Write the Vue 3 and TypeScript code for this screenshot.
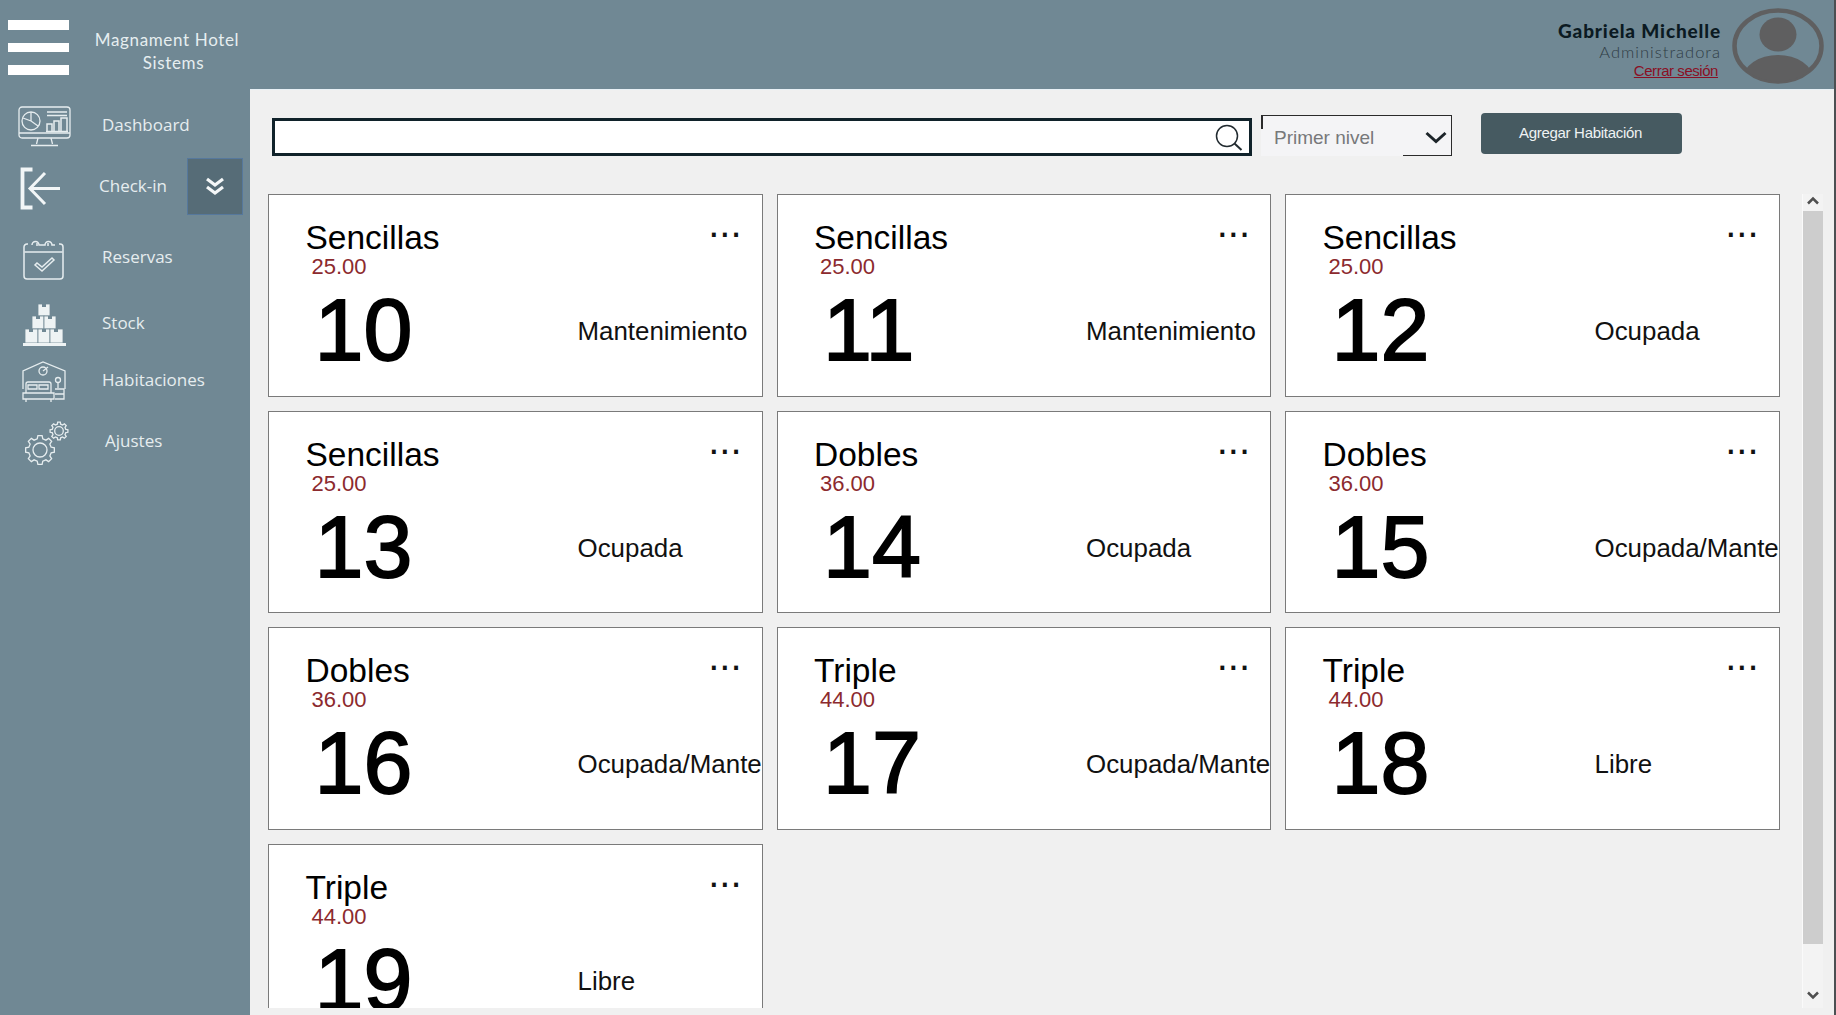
<script setup lang="ts">
interface Room { type: string; price: string; num: number; status: string }
const rooms: Room[] = [
  { type: 'Sencillas', price: '25.00', num: 10, status: 'Mantenimiento' },
  { type: 'Sencillas', price: '25.00', num: 11, status: 'Mantenimiento' },
  { type: 'Sencillas', price: '25.00', num: 12, status: 'Ocupada' },
  { type: 'Sencillas', price: '25.00', num: 13, status: 'Ocupada' },
  { type: 'Dobles', price: '36.00', num: 14, status: 'Ocupada' },
  { type: 'Dobles', price: '36.00', num: 15, status: 'Ocupada/Mantenimiento' },
  { type: 'Dobles', price: '36.00', num: 16, status: 'Ocupada/Mantenimiento' },
  { type: 'Triple', price: '44.00', num: 17, status: 'Ocupada/Mantenimiento' },
  { type: 'Triple', price: '44.00', num: 18, status: 'Libre' },
  { type: 'Triple', price: '44.00', num: 19, status: 'Libre' },
]

function gear(cx: number, cy: number, outer: number, inner: number, teeth: number): string {
  const pts: string[] = []
  const step = (Math.PI * 2) / teeth
  for (let i = 0; i < teeth; i++) {
    const a = i * step
    const offs: [number, number][] = [
      [-0.5, inner], [-0.3, outer], [0.3, outer], [0.5, inner],
    ]
    for (const [o, r] of offs) {
      const t = a + o * step * 0.62
      pts.push(`${(cx + Math.cos(t) * r).toFixed(2)} ${(cy + Math.sin(t) * r).toFixed(2)}`)
    }
  }
  return 'M' + pts.join('L') + 'Z'
}
const gearBig = gear(16, 29, 14.5, 11.5, 8)
const gearSmall = gear(35, 10, 9, 7, 8)
</script>

<template>
  <div class="app">
    <header class="topbar">
      <div class="brand">
        <div class="burger"><span></span><span></span><span></span></div>
        <div class="brand-name">
          <div>Magnament Hotel</div>
          <div class="brand-sub">Sistems</div>
        </div>
      </div>
      <div class="user">
        <div class="user-text">
          <div class="user-name">Gabriela Michelle</div>
          <div class="user-role">Administradora</div>
          <a class="user-logout">Cerrar sesión</a>
        </div>
        <svg class="avatar" viewBox="0 0 92 76" aria-hidden="true">
          <defs><clipPath id="av"><ellipse cx="46" cy="38" rx="44" ry="35.5" /></clipPath></defs>
          <ellipse cx="46" cy="38" rx="43.5" ry="35.5" fill="none" stroke="#5f5f60" stroke-width="4.5" />
          <ellipse cx="46" cy="26.5" rx="18.5" ry="17" fill="#5f5f60" />
          <ellipse cx="46" cy="71" rx="35" ry="24" fill="#5f5f60" clip-path="url(#av)" />
        </svg>
      </div>
    </header>

    <div class="body">
      <nav class="sidebar">
        <div class="nav-item">
          <span class="nav-icon">
            <svg width="53" height="43" viewBox="0 0 53 43" fill="none" stroke="#e6edef" stroke-width="1.3">
              <rect x="1" y="1" width="51" height="31" rx="3" />
              <path d="M1 27h51M20 32l-1.500 6M33 32l1.500 6M13 39.500h27" />
              <circle cx="13" cy="15" r="9" />
              <path d="M13 6v9l7 5M13 15l-8-3" />
              <path d="M29 6h20M29 9.500h20" />
              <path d="M29 25v-7h5v7M36 25v-10h5v10M43 25v-13h6v13M28 25.500h22" stroke-width="1.500" />
            </svg>
          </span>
          <span class="nav-label">Dashboard</span>
        </div>
        <div class="nav-item nav-checkin">
          <span class="nav-icon">
            <svg width="44" height="44" viewBox="0 0 44 44" fill="none" stroke="#f2f6f7">
              <path d="M13.500 3.500H3.500V41.500H13.500" stroke-width="3.800" />
              <path d="M41 22.500H11M26 7L11 22.500L26 38" stroke-width="3" />
            </svg>
          </span>
          <span class="nav-label">Check-in</span>
          <span class="collapse">
            <svg width="20" height="20" viewBox="0 0 20 20" fill="none" stroke="#f4f7f8" stroke-width="3.200">
              <path d="M2 3l8 6 8-6M2 11l8 6 8-6" />
            </svg>
          </span>
        </div>
        <div class="nav-item">
          <span class="nav-icon">
            <svg width="42" height="42" viewBox="0 0 42 42" fill="none" stroke="#e6edef" stroke-width="1.500">
              <path d="M5 6h-1a3 3 0 0 0-3 3V38a3 3 0 0 0 3 3H37a3 3 0 0 0 3-3V9a3 3 0 0 0-3-3h-1" />
              <path d="M9 7a3.500 3.500 0 0 1 7 0h6a3.500 3.500 0 0 1 7 0h3" />
              <path d="M14 5v3M25 5v3" />
              <path d="M1.500 14H39.500" />
              <path d="M12 27l7 6 12-11-2-2-10 9-5-4z" />
            </svg>
          </span>
          <span class="nav-label">Reservas</span>
        </div>
        <div class="nav-item">
          <span class="nav-icon">
            <svg width="43" height="44" viewBox="0 0 43 44" fill="#eef3f4" stroke="#708894" stroke-width=".8">
              <rect x="15" y="1" width="12" height="12" />
              <rect x="9" y="13" width="12" height="13" />
              <rect x="21" y="13" width="12" height="13" />
              <rect x="2" y="26" width="13" height="14" />
              <rect x="15" y="26" width="12" height="14" />
              <rect x="27" y="26" width="13" height="14" />
              <rect x="0" y="40" width="43" height="3" stroke="none" />
              <path d="M19 1v3h4V1M13 13v3h4v-3M25 13v3h4v-3M6 26v3h4v-3M19 26v3h4v-3M31 26v3h4v-3" fill="#708894" stroke="none" />
            </svg>
          </span>
          <span class="nav-label">Stock</span>
        </div>
        <div class="nav-item">
          <span class="nav-icon">
            <svg width="44" height="42" viewBox="0 0 44 42" fill="none" stroke="#e6edef" stroke-width="1.300">
              <path d="M1 13V10L21 1L43 10V13M1 13V28M43 13V28" />
              <circle cx="21" cy="10" r="4" />
              <path d="M21 10l5-4" />
              <path d="M4 32v-9a2 2 0 0 1 2-2H27a2 2 0 0 1 2 2v9M1 32H32v6H1zM4 38v3M29 38v3" />
              <path d="M6 28v-4h9v4zM17 28v-4h9v4z" />
              <circle cx="36" cy="19" r="2.500" />
              <path d="M36 21.500V27M33 28h9v10h-9M33 33h9" />
            </svg>
          </span>
          <span class="nav-label">Habitaciones</span>
        </div>
        <div class="nav-item nav-settings">
          <span class="nav-icon">
            <svg width="46" height="44" viewBox="0 0 46 44" fill="none" stroke="#e6edef" stroke-width="1.300">
              <path :d="gearBig" />
              <circle cx="16" cy="29" r="7" />
              <path :d="gearSmall" />
              <circle cx="35" cy="10" r="4.300" />
            </svg>
          </span>
          <span class="nav-label">Ajustes</span>
        </div>
      </nav>

      <main class="main">
        <div class="toolbar">
          <div class="search">
            <svg width="28" height="28" viewBox="0 0 28 28" fill="none" stroke="#222b30">
              <circle cx="12" cy="12" r="10.500" stroke-width="1.500" />
              <path d="M19.500 19.500L26.500 26" stroke-width="2" />
            </svg>
          </div>
          <div class="select">
            <span class="select-text">Primer nivel</span>
            <svg width="22" height="14" viewBox="0 0 22 14" fill="none" stroke="#1c2429" stroke-width="3">
              <path d="M1.500 2L11 10.500L20.500 2" />
            </svg>
          </div>
          <button class="add" type="button">Agregar Habitación</button>
        </div>

        <div class="content">
          <div class="grid">
            <article v-for="r in rooms" :key="r.num" class="card">
              <div class="card-top">
                <span class="card-type">{{ r.type }}</span>
                <span class="card-menu">...</span>
              </div>
              <div class="card-price">{{ r.price }}</div>
              <div class="card-bottom">
                <span class="card-num">{{ r.num }}</span>
                <span class="card-status">{{ r.status }}</span>
              </div>
            </article>
          </div>
          <div class="scrollbar">
            <svg width="14" height="9" viewBox="0 0 14 9" fill="none" stroke="#4f4f4f" stroke-width="2.500"><path d="M2 7.500L7 2.500L12 7.500" /></svg>
            <div class="thumb"></div>
            <svg width="14" height="9" viewBox="0 0 14 9" fill="none" stroke="#4f4f4f" stroke-width="2.500"><path d="M2 1.500L7 6.500L12 1.500" /></svg>
          </div>
        </div>
      </main>
    </div>
  </div>
</template>

<style scoped>
.app {
  width: 1836px;
  height: 1015px;
  box-sizing: border-box;
  border-right: 2px solid #4b4f52;
  display: flex;
  flex-direction: column;
  overflow: hidden;
  background: #708894;
  font-family: "Liberation Sans", Arial, sans-serif;
}
.topbar {
  height: 89px;
  flex: none;
  display: flex;
  justify-content: space-between;
}
.brand { display: flex; align-items: flex-start; }
.burger {
  width: 61px;
  margin: 20px 0 0 8px;
  display: flex;
  flex-direction: column;
  gap: 13px;
}
.burger span { display: block; height: 9.500px; background: #fff; }
.brand-name {
  width: 158px;
  margin: 28px 0 0 19px;
  text-align: center;
  font-family: Lato, sans-serif;
  font-weight: 400;
  font-size: 17px;
  line-height: 23px;
  letter-spacing: .65px;
  color: #e6eef0;
}
.brand-sub { padding-left: 13px; }
.user { display: flex; align-items: flex-start; }
.user-text {
  margin-top: 20px;
  text-align: right;
  display: flex;
  flex-direction: column;
  align-items: flex-end;
}
.user-name {
  font-family: Lato, sans-serif;
  font-weight: 900;
  font-size: 19px;
  line-height: 22px;
  letter-spacing: .85px;
  color: #0b1a22;
}
.user-role {
  font-family: Lato, sans-serif;
  font-weight: 300;
  font-size: 16.500px;
  line-height: 20px;
  letter-spacing: 1px;
  color: #2f3c44;
}
.user-logout {
  margin-right: 3px;
  font-size: 15px;
  line-height: 18px;
  letter-spacing: -.45px;
  color: #8a0f24;
  text-decoration: underline;
}
.avatar { width: 92px; height: 76px; margin: 8px 10px 0 11px; }

.body { flex: 1; min-height: 0; display: flex; }
.sidebar {
  width: 250px;
  flex: none;
  box-sizing: border-box;
  padding-top: 6px;
  display: grid;
  grid-template-rows: 60px 62px 80px 52px 62px 60px;
  align-content: start;
}
.nav-item { display: flex; align-items: center; }
.nav-icon { width: 88px; flex: none; display: flex; justify-content: center; padding-top: 4px; box-sizing: border-box; }
.nav-label {
  margin-left: 14px;
  padding-bottom: 2px;
  font-family: "Open Sans", sans-serif;
  font-size: 17px;
  color: #e6edef;
}
.nav-checkin .nav-icon { justify-content: flex-start; padding-left: 19px; }
.nav-checkin .nav-label { margin-left: 11px; }
.nav-settings .nav-icon { padding-left: 6px; }
.nav-settings .nav-label { margin-left: 17px; }
.collapse {
  width: 56px;
  height: 57px;
  box-sizing: border-box;
  margin-left: auto;
  margin-right: 7px;
  background: #566c77;
  border: 1px solid #56789c;
  display: flex;
  align-items: center;
  justify-content: center;
}

.main {
  flex: 1;
  min-width: 0;
  display: flex;
  flex-direction: column;
  background: #f0f0f0;
  border-top: 1px solid #e8f0f5;
  box-sizing: border-box;
}
.toolbar {
  height: 104px;
  flex: none;
  box-sizing: border-box;
  padding: 23px 0 0 22px;
  display: flex;
  align-items: flex-start;
}
.search {
  width: 980px;
  height: 38px;
  margin-top: 5px;
  box-sizing: border-box;
  background: #fff;
  border: 3px solid #10222a;
  display: flex;
  align-items: center;
  justify-content: flex-end;
  padding: 2px 6px 0 0;
}
.select {
  position: relative;
  width: 191px;
  height: 41px;
  margin: 2px 0 0 9px;
  box-sizing: border-box;
  background: #f4f4f6;
  border-top: 1.500px solid #2b2b2b;
  border-right: 1.500px solid #2b2b2b;
  display: flex;
  align-items: center;
  justify-content: space-between;
  padding: 3px 4px 0 13px;
}
.select::before {
  content: "";
  position: absolute;
  left: 0;
  top: 0;
  width: 1.500px;
  height: 13px;
  background: #2b2b2b;
}
.select::after {
  content: "";
  position: absolute;
  right: 0;
  bottom: 0;
  width: 48px;
  height: 1.500px;
  background: #2b2b2b;
}
.select-text { font-size: 19px; color: #77787a; }
.add {
  width: 201px;
  height: 41px;
  margin-left: 29px;
  border: none;
  border-radius: 4px;
  padding: 0 2px 3px 0;
  background: #465a61;
  color: #eef2f3;
  font-family: "Liberation Sans", Arial, sans-serif;
  font-size: 15px;
  letter-spacing: -.3px;
}

.content { flex: 1; min-height: 0; display: flex; margin-bottom: 7px; overflow: hidden; }
.grid {
  width: 1513px;
  flex: none;
  box-sizing: border-box;
  padding-left: 18px;
  display: grid;
  grid-template-columns: repeat(3, 494.500px);
  grid-auto-rows: 202.600px;
  gap: 14px;
  align-content: start;
}
.card {
  box-sizing: border-box;
  padding: 23px 0 0 36.500px;
  background: #fff;
  border: 1.500px solid #7a7a7a;
  overflow: hidden;
  color: #000;
}
.card-top { display: flex; justify-content: space-between; height: 40px; }
.card-type { font-size: 33.500px; line-height: 40px; }
.card-menu {
  font-size: 40px;
  line-height: 40px;
  margin: -15px 20px 0 0;
  color: #111;
}
.card-price {
  margin: -3px 0 0 6px;
  font-size: 22px;
  line-height: 24px;
  color: #8c2a2e;
}
.card-bottom { display: flex; margin-top: 5px; white-space: nowrap; }
.card-num {
  width: 272px;
  flex: none;
  padding-left: 9px;
  box-sizing: border-box;
  font-size: 88px;
  line-height: 91px;
  -webkit-text-stroke: 1.800px #000;
}
.card-status {
  margin-top: 32px;
  font-size: 25.900px;
  line-height: 30px;
  color: #111;
}
.scrollbar {
  width: 21px;
  flex: none;
  margin-left: 39px;
  display: flex;
  flex-direction: column;
  align-items: center;
  justify-content: space-between;
  padding: 2px 0 8px;
  background: #f3f3f3;
  border-left: 1px solid #fafafa;
  box-sizing: border-box;
}
.thumb { width: 20px; height: 733px; background: #cdcdcd; margin: 6px 0 auto; }
</style>
